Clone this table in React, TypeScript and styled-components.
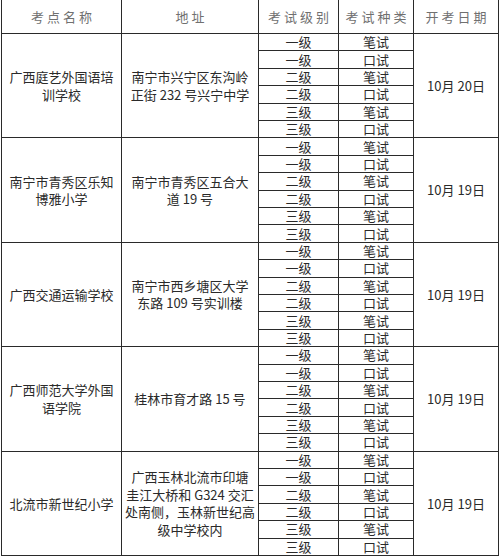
import React from "react";
import styled, { createGlobalStyle } from "styled-components";

const GlobalStyle = createGlobalStyle`
  html, body {
    margin: 0;
    padding: 0;
    background: #ffffff;
  }
  body {
    font-family: "Noto Sans CJK SC", "Noto Sans", sans-serif;
  }
`;

type Site = {
  name: string[];
  address: string[];
  date: string;
};

const sites: Site[] = [
  {
    name: ["广西庭艺外国语培", "训学校"],
    address: ["南宁市兴宁区东沟岭", "正街 232 号兴宁中学"],
    date: "10月 20日",
  },
  {
    name: ["南宁市青秀区乐知", "博雅小学"],
    address: ["南宁市青秀区五合大", "道 19 号"],
    date: "10月 19日",
  },
  {
    name: ["广西交通运输学校"],
    address: ["南宁市西乡塘区大学", "东路 109 号实训楼"],
    date: "10月 19日",
  },
  {
    name: ["广西师范大学外国", "语学院"],
    address: ["桂林市育才路 15 号"],
    date: "10月 19日",
  },
  {
    name: ["北流市新世纪小学"],
    address: ["广西玉林北流市印塘", "圭江大桥和 G324 交汇", "处南侧，玉林新世纪高", "级中学校内"],
    date: "10月 19日",
  },
];

const sessions = [
  ["一级", "笔试"],
  ["一级", "口试"],
  ["二级", "笔试"],
  ["二级", "口试"],
  ["三级", "笔试"],
  ["三级", "口试"],
];

const Table = styled.div`
  display: grid;
  grid-template-columns: 120px 137px 80px 75px 85px;
  grid-template-rows: 34px repeat(30, 1fr);
  height: 556px;
  width: 498px;
  margin-left: 1px;
  border-left: 1px solid #2a2a2a;
  box-sizing: border-box;
`;

const Cell = styled.div`
  display: flex;
  flex-direction: column;
  align-items: center;
  justify-content: center;
  min-height: 0;
  border-right: 1px solid #2a2a2a;
  border-bottom: 1px solid #2a2a2a;
  box-sizing: border-box;
  color: #2a2a2a;
  font-size: 13px;
  line-height: 17.5px;
  text-align: center;
`;

const HeadCell = styled(Cell)`
  color: #707070;
  letter-spacing: 3px;
  padding-left: 3px;
`;

const SpanCell = styled(Cell)<{ $col: number; $row: number }>`
  grid-column: ${(p) => p.$col};
  grid-row: ${(p) => p.$row} / span 6;
  padding: 0 4px;
`;

const SubCell = styled(Cell)<{ $col: number; $row: number }>`
  grid-column: ${(p) => p.$col};
  grid-row: ${(p) => p.$row};
  line-height: 16px;
`;

const Line = styled.span`
  white-space: nowrap;
`;

export default function App() {
  return (
    <>
      <GlobalStyle />
      <Table>
        <HeadCell>考点名称</HeadCell>
        <HeadCell>地址</HeadCell>
        <HeadCell>考试级别</HeadCell>
        <HeadCell>考试种类</HeadCell>
        <HeadCell>开考日期</HeadCell>
        {sites.map((site, i) => {
          const start = 2 + i * 6;
          return (
            <React.Fragment key={i}>
              <SpanCell $col={1} $row={start}>
                {site.name.map((l) => (
                  <Line key={l}>{l}</Line>
                ))}
              </SpanCell>
              <SpanCell $col={2} $row={start}>
                {site.address.map((l) => (
                  <Line key={l}>{l}</Line>
                ))}
              </SpanCell>
              {sessions.map(([level, kind], j) => (
                <React.Fragment key={j}>
                  <SubCell $col={3} $row={start + j}>
                    {level}
                  </SubCell>
                  <SubCell $col={4} $row={start + j}>
                    {kind}
                  </SubCell>
                </React.Fragment>
              ))}
              <SpanCell $col={5} $row={start}>
                {site.date}
              </SpanCell>
            </React.Fragment>
          );
        })}
      </Table>
    </>
  );
}
